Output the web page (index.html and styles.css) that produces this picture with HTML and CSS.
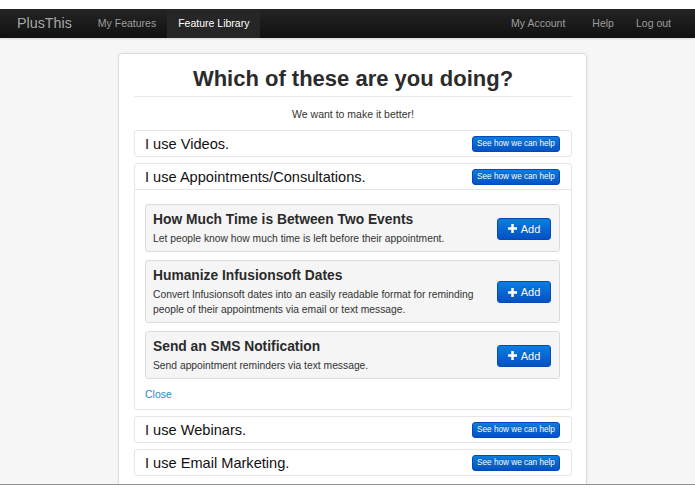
FILE: index.html
```html
<!DOCTYPE html>
<html>
<head>
<meta charset="utf-8">
<title>PlusThis</title>
<link rel="stylesheet" href="styles.css">
</head>
<body>
<div class="frame">
  <header class="navbar">
    <a class="brand" href="#">PlusThis</a>
    <nav class="nav">
      <a href="#">My Features</a>
      <a href="#" class="active">Feature Library</a>
    </nav>
    <nav class="nav nav-right">
      <a href="#">My Account</a>
      <a href="#">Help</a>
      <a href="#">Log out</a>
    </nav>
  </header>
  <main class="main">
    <section class="card">
      <h1 class="title">Which of these are you doing?</h1>
      <p class="lead">We want to make it better!</p>

      <div class="panel">
        <div class="panel-head">
          <span class="panel-label">I use Videos.</span>
          <a class="btn btn-mini" href="#">See how we can help</a>
        </div>
      </div>

      <div class="panel">
        <div class="panel-head open">
          <span class="panel-label">I use Appointments/Consultations.</span>
          <a class="btn btn-mini" href="#">See how we can help</a>
        </div>
        <div class="panel-body">
          <div class="feature">
            <div class="feature-text">
              <h3>How Much Time is Between Two Events</h3>
              <p>Let people know how much time is left before their appointment.</p>
            </div>
            <a class="btn btn-add" href="#"><svg class="plus" viewBox="0 0 10 10" width="9" height="9"><path d="M3.6 0h2.8v3.6H10v2.8H6.4V10H3.6V6.4H0V3.6h3.6z" fill="#fff"/></svg>Add</a>
          </div>
          <div class="feature">
            <div class="feature-text">
              <h3>Humanize Infusionsoft Dates</h3>
              <p>Convert Infusionsoft dates into an easily readable format for reminding people of their appointments via email or text message.</p>
            </div>
            <a class="btn btn-add" href="#"><svg class="plus" viewBox="0 0 10 10" width="9" height="9"><path d="M3.6 0h2.8v3.6H10v2.8H6.4V10H3.6V6.4H0V3.6h3.6z" fill="#fff"/></svg>Add</a>
          </div>
          <div class="feature">
            <div class="feature-text">
              <h3>Send an SMS Notification</h3>
              <p>Send appointment reminders via text message.</p>
            </div>
            <a class="btn btn-add" href="#"><svg class="plus" viewBox="0 0 10 10" width="9" height="9"><path d="M3.6 0h2.8v3.6H10v2.8H6.4V10H3.6V6.4H0V3.6h3.6z" fill="#fff"/></svg>Add</a>
          </div>
          <a class="close-link" href="#">Close</a>
        </div>
      </div>

      <div class="panel">
        <div class="panel-head">
          <span class="panel-label">I use Webinars.</span>
          <a class="btn btn-mini" href="#">See how we can help</a>
        </div>
      </div>

      <div class="panel">
        <div class="panel-head">
          <span class="panel-label">I use Email Marketing.</span>
          <a class="btn btn-mini" href="#">See how we can help</a>
        </div>
      </div>
    </section>
  </main>
</div>
</body>
</html>
```

FILE: styles.css
```css
* { box-sizing: border-box; }

html, body {
  margin: 0;
  padding: 0;
  background: #ffffff;
}

body {
  font-family: "Liberation Sans", Arial, sans-serif;
  color: #333;
}

a { text-decoration: none; }

.frame {
  margin-top: 9px;
  height: 476px;
  background: #f6f6f6;
  border-bottom: 1px solid #8f8f8f;
  overflow: hidden;
  display: flex;
  flex-direction: column;
}

/* navbar */
.navbar {
  height: 29px;
  flex: none;
  display: flex;
  align-items: stretch;
  background: linear-gradient(to bottom, #242424, #111111);
  box-shadow: 0 1px 2px rgba(0,0,0,0.12);
}

.brand {
  padding-left: 17px;
  margin-right: 15px;
  font-size: 14.3px;
  line-height: 29px;
  color: #a6a6a6;
}

.nav {
  display: flex;
}

.nav a {
  padding: 0 11px;
  font-size: 10.5px;
  line-height: 29px;
  color: #9d9d9d;
}

.nav a.active {
  background: #262626;
  color: #ffffff;
}

.nav-right {
  margin-left: auto;
  padding-right: 13px;
}

.nav-right a:first-child {
  padding-left: 12px;
  padding-right: 16px;
}

/* main */
.main {
  padding: 15px 0 0 118px;
}

.card {
  width: 469px;
  background: #fff;
  border: 1px solid #dcdcdc;
  border-radius: 4px;
  box-shadow: 0 0 3px rgba(0,0,0,0.06);
  padding: 11px 14px 20px 15px;
}

.title {
  margin: 0;
  padding-bottom: 4px;
  border-bottom: 1px solid #eaeaea;
  font-size: 22px;
  line-height: 27px;
  font-weight: bold;
  text-align: center;
  color: #2b2b2b;
}

.lead {
  margin: 10px 0 8px;
  font-size: 10.5px;
  line-height: 15px;
  text-align: center;
  color: #333;
}

/* panels */
.panel {
  border: 1px solid #e6e6e6;
  border-radius: 3px;
  background: #fff;
  margin-bottom: 6px;
}

.panel-head {
  display: flex;
  align-items: center;
  justify-content: space-between;
  height: 25px;
  padding: 0 11px 0 10px;
}

.panel-head.open {
  height: 26px;
  border-bottom: 1px solid #e6e6e6;
}

.panel-label {
  font-size: 14.6px;
  color: #111;
}

.btn {
  display: inline-flex;
  align-items: center;
  justify-content: center;
  color: #fff;
  background: linear-gradient(to bottom, #0b7ee0, #0451c4);
  border: 1px solid #0449b5;
  border-radius: 3px;
  text-shadow: 0 -1px 0 rgba(0,0,0,0.2);
}

.btn-mini {
  height: 16px;
  width: 88px;
  font-size: 8.2px;
}

.panel-body {
  padding: 14px 11px 7px 10px;
}

.feature {
  display: flex;
  align-items: center;
  background: #f5f5f5;
  border: 1px solid #dcdcdc;
  border-radius: 3px;
  padding: 6px 8px 5px 7px;
  margin-bottom: 8px;
}

.feature-text {
  flex: 1;
  padding-right: 14px;
}

.feature-text h3 {
  margin: 0 0 3px;
  font-size: 13.8px;
  line-height: 17px;
  font-weight: bold;
  color: #2b2b2b;
}

.feature-text p {
  margin: 0;
  font-size: 10.3px;
  line-height: 15px;
  color: #333;
}

.btn-add {
  flex: none;
  width: 54px;
  height: 22px;
  font-size: 11px;
}

.plus {
  margin-right: 4px;
}

.close-link {
  display: block;
  margin-top: 1px;
  font-size: 10.5px;
  line-height: 15px;
  color: #2a8ac9;
}
```
